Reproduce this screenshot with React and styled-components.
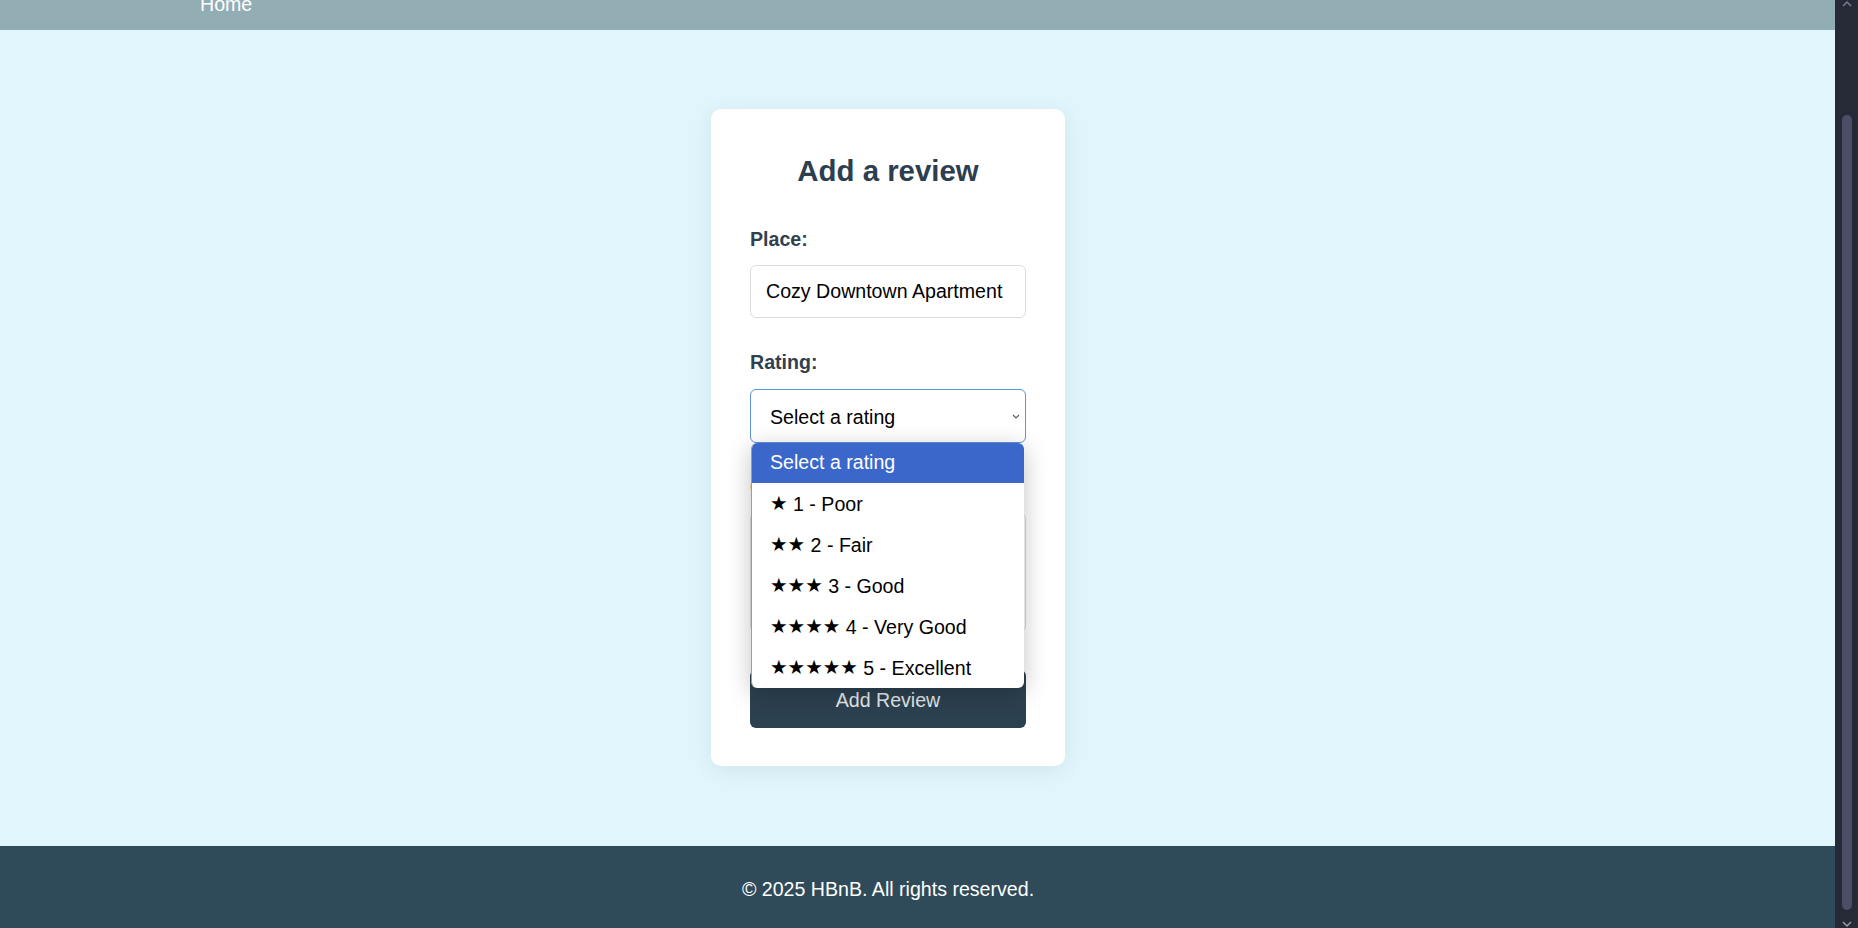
import React from 'react';
import styled, { createGlobalStyle } from 'styled-components';

const GlobalStyle = createGlobalStyle`
  html, body {
    margin: 0;
    padding: 0;
    overflow: hidden;
  }
  body {
    background: #e0f5fc;
    font-family: "Liberation Sans", Arial, "DejaVu Sans", sans-serif;
  }
  * {
    box-sizing: border-box;
  }
`;

const Page = styled.div`
  display: flex;
  flex-direction: column;
  min-height: 928px;
  margin-right: 23px;
`;

const Header = styled.header`
  height: 30px;
  overflow: hidden;
  display: flex;
  align-items: flex-end;
  padding: 0 0 15px 200px;
  background: #93adb5;
`;

const NavLink = styled.a`
  color: #ffffff;
  font-size: 19.6px;
  line-height: 22px;
  text-decoration: none;
  white-space: nowrap;
`;

const Main = styled.main`
  flex: 1;
  display: flex;
  justify-content: center;
  align-items: flex-start;
  padding: 79px 59px 80px 0;
`;

const Card = styled.div`
  width: 354px;
  padding: 45px 39px 38px;
  background: #ffffff;
  border-radius: 10px;
  box-shadow: 0 4px 22px rgba(0, 0, 0, 0.07);
`;

const Title = styled.h2`
  margin: 0 0 40px;
  font-size: 29.4px;
  line-height: 34px;
  font-weight: 700;
  text-align: center;
  color: #2c3e50;
`;

const Group = styled.div`
  margin-bottom: ${(p) => p.$gap || 33}px;
`;

const Label = styled.label`
  display: block;
  margin-bottom: 15px;
  font-size: 19.6px;
  line-height: 22px;
  font-weight: 700;
  color: #313f4f;
`;

const TextInput = styled.input`
  display: block;
  width: 100%;
  height: 53px;
  padding: 0 15px;
  border: 1px solid #dcdcdc;
  border-radius: 6px;
  font-family: inherit;
  font-size: 19.6px;
  color: #000;
  background: #fff;
  outline: none;
`;

const SelectWrap = styled.div`
  position: relative;
  margin-top: 16px;
`;

const SelectBox = styled.div`
  display: flex;
  align-items: center;
  justify-content: space-between;
  height: 54px;
  padding: 1px 5px 0 19px;
  border: 1px solid #5f94db;
  border-radius: 6px;
  font-size: 19.6px;
  line-height: 22px;
  color: #000;
  background: #fff;
`;

const Popup = styled.ul`
  position: absolute;
  z-index: 5;
  top: 100%;
  left: 1px;
  right: 2px;
  margin: 0;
  padding: 0;
  list-style: none;
  background: #fff;
  border-radius: 6px;
  border-left: 1px solid #9c9c9c;
  overflow: hidden;
  box-shadow: 0 5px 24px rgba(0, 0, 0, 0.24);
`;

const Option = styled.li`
  height: ${(p) => (p.$active ? 40 : 41)}px;
  padding: 0 0 ${(p) => (p.$active ? 3 : 0)}px 18px;
  display: flex;
  align-items: center;
  font-size: 19.6px;
  line-height: 22px;
  white-space: nowrap;
  color: ${(p) => (p.$active ? '#fff' : '#000')};
  background: ${(p) => (p.$active ? '#3b67cb' : 'transparent')};
`;

const Stars = styled.span`
  font-family: "DejaVu Sans", sans-serif;
  font-size: 19.6px;
`;

const TextArea = styled.textarea`
  display: block;
  width: 100%;
  height: 119px;
  padding: 14px;
  border: 1px solid #dcdcdc;
  border-radius: 6px;
  font-family: inherit;
  font-size: 19.6px;
  resize: none;
  outline: none;
`;

const SubmitButton = styled.button`
  display: block;
  width: 100%;
  height: 58px;
  padding: 2px 0 0;
  border: none;
  border-radius: 6px;
  background: #2c4150;
  color: #e4e8ea;
  font-family: inherit;
  font-size: 19.6px;
  cursor: pointer;
`;

const Footer = styled.footer`
  height: 83px;
  display: flex;
  align-items: center;
  justify-content: center;
  padding: 2px 59px 0 0;
  background: #2f4b5a;
  color: #ffffff;
  font-size: 19.6px;
  line-height: 22px;
`;

const ScrollBar = styled.div`
  position: fixed;
  top: 0;
  right: 0;
  width: 23px;
  height: 100vh;
  background: #262a37;
`;

const Thumb = styled.div`
  position: absolute;
  top: 115px;
  left: 7px;
  width: 10px;
  height: 795px;
  border-radius: 5px;
  background: #4a4f66;
`;

const Arrow = styled.svg`
  position: absolute;
  left: 7px;
  ${(p) => (p.$down ? 'bottom: 1px;' : 'top: 1px;')}
`;

const ratings = [
  { stars: '★', label: '1 - Poor' },
  { stars: '★★', label: '2 - Fair' },
  { stars: '★★★', label: '3 - Good' },
  { stars: '★★★★', label: '4 - Very Good' },
  { stars: '★★★★★', label: '5 - Excellent' },
];

function Chevron() {
  return (
    <svg width="8" height="5" viewBox="0 0 8 5">
      <polyline points="1,1 4,4 7,1" fill="none" stroke="#5a5a5a" strokeWidth="1.2" />
    </svg>
  );
}

export default function App() {
  return (
    <>
      <GlobalStyle />
      <Page>
        <Header>
          <NavLink href="#">Home</NavLink>
        </Header>
        <Main>
          <Card>
            <Title>Add a review</Title>
            <Group>
              <Label htmlFor="place">Place:</Label>
              <TextInput id="place" readOnly defaultValue="Cozy Downtown Apartment" />
            </Group>
            <Group>
              <Label as="div">Rating:</Label>
              <SelectWrap>
                <SelectBox>
                  <span>Select a rating</span>
                  <Chevron />
                </SelectBox>
                <Popup>
                  <Option $active>Select a rating</Option>
                  {ratings.map((r) => (
                    <Option key={r.label}>
                      <Stars>{r.stars}</Stars>&nbsp;{r.label}
                    </Option>
                  ))}
                </Popup>
              </SelectWrap>
            </Group>
            <Group $gap={38}>
              <Label htmlFor="comment">Comment:</Label>
              <TextArea id="comment" />
            </Group>
            <SubmitButton type="button">Add Review</SubmitButton>
          </Card>
        </Main>
        <Footer>© 2025 HBnB. All rights reserved.</Footer>
      </Page>
      <ScrollBar>
        <Arrow width="10" height="6" viewBox="0 0 10 6">
          <polyline points="1,5 5,1 9,5" fill="none" stroke="#7d8193" strokeWidth="1.4" />
        </Arrow>
        <Thumb />
        <Arrow $down width="10" height="6" viewBox="0 0 10 6">
          <polyline points="1,1 5,5 9,1" fill="none" stroke="#9a9eae" strokeWidth="1.4" />
        </Arrow>
      </ScrollBar>
    </>
  );
}
